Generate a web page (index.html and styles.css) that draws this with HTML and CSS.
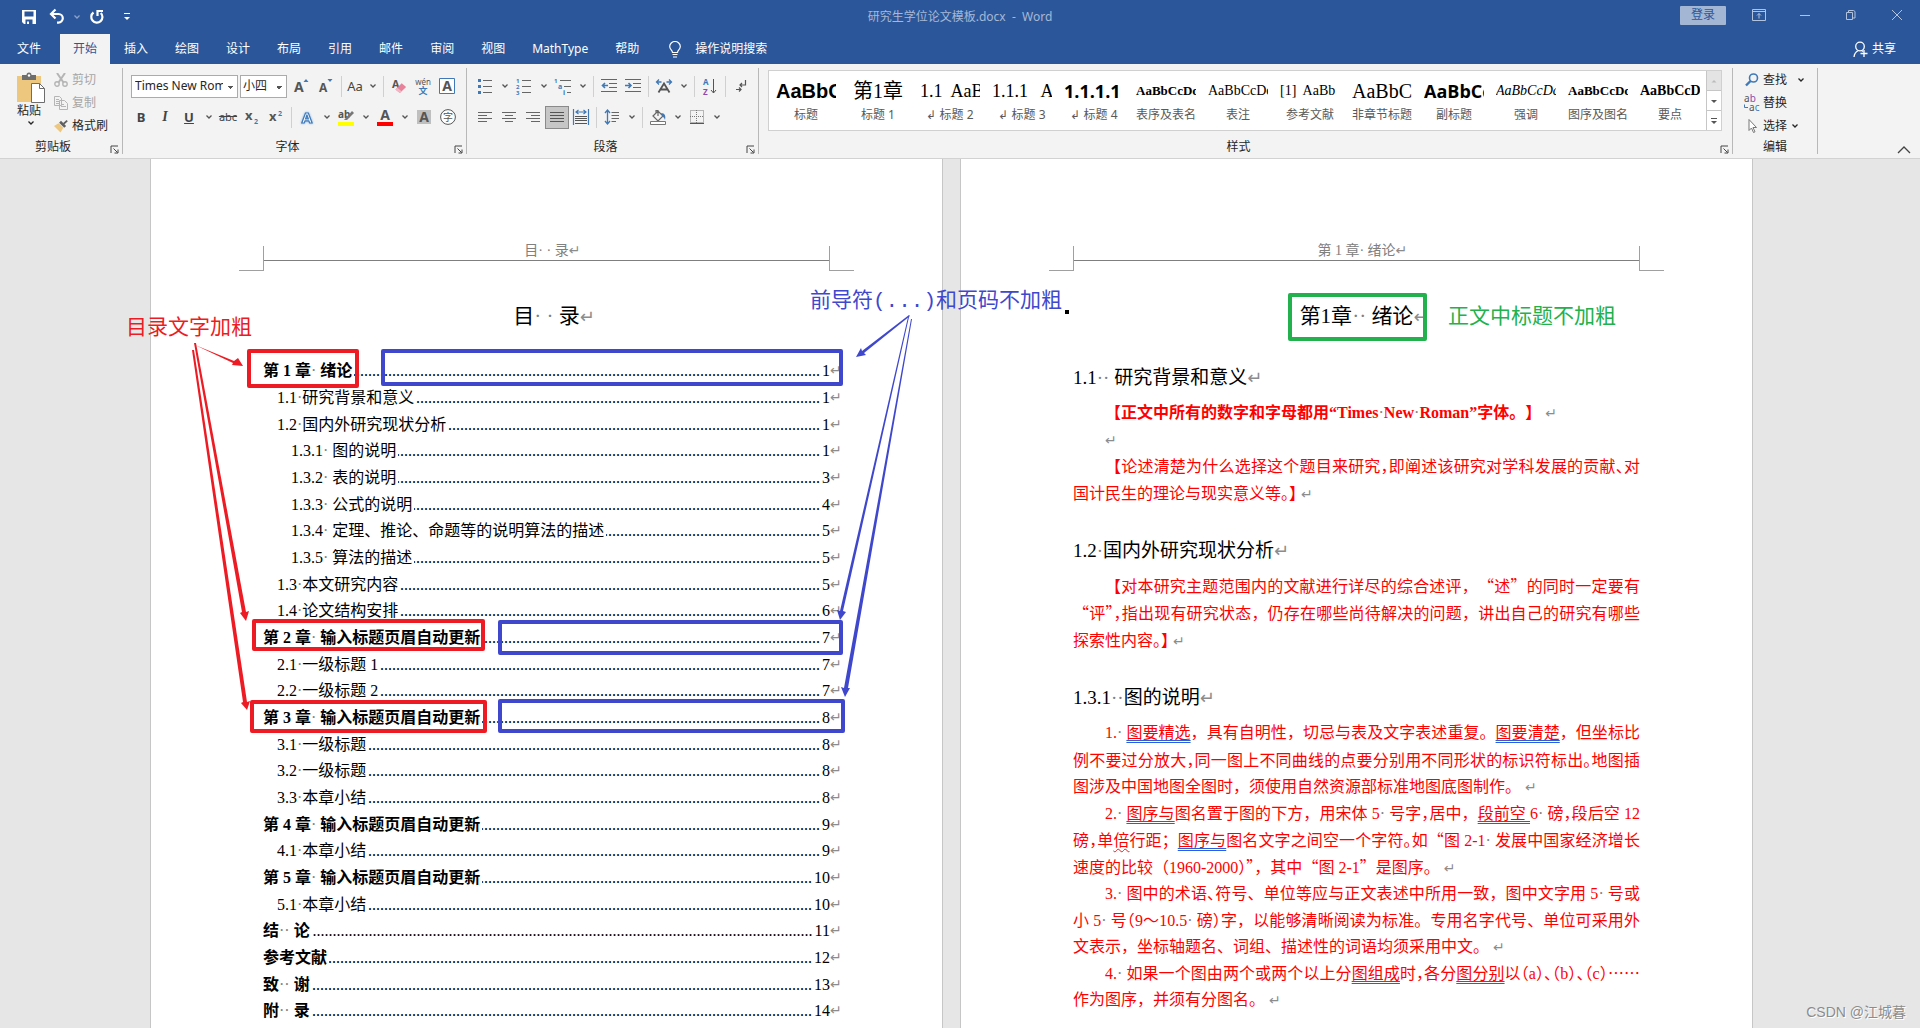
FILE: index.html
```html
<!DOCTYPE html>
<html lang="zh-CN">
<head>
<meta charset="utf-8">
<title>研究生学位论文模板.docx - Word</title>
<link rel="stylesheet" href="styles.css">
</head>
<body>
<svg class="defs" aria-hidden="true">
  <symbol id="chev" viewBox="0 0 8 8"><path d="M1.5 2.5 4 5l2.5-2.5" fill="none" stroke="currentColor" stroke-width="1.3"/></symbol>
  <symbol id="launch" viewBox="0 0 9 9"><path d="M1 8V1h7M3.5 3.5l4 4M8 4.5V8H4.500" fill="none" stroke="#444" stroke-width="1"/></symbol>
</svg>

<header class="titlebar">
  <div class="quick">
    <button class="tool" aria-label="保存"><svg width="16" height="16" viewBox="0 0 16 16"><path d="M1 1h14v14H3l-2-2z" fill="#fff"/><path d="M3.500 2.500h9v5h-9zM4.500 10.500h7V15H8v-2.500H6V15H4.500z" fill="#2b579a"/></svg></button>
    <button class="tool" aria-label="撤销"><svg width="16" height="16" viewBox="0 0 16 16"><path d="M2 5h7.500a4.300 4.300 0 0 1 0 8.600H8" fill="none" stroke="#fff" stroke-width="2.200"/><path d="M6.500.500 2 5l4.500 4.500" fill="none" stroke="#fff" stroke-width="2.200"/></svg></button>
    <button class="drop pale" aria-label="撤销列表"><svg width="8" height="8"><use href="#chev"/></svg></button>
    <button class="tool" aria-label="重复"><svg width="16" height="16" viewBox="0 0 16 16"><path d="M4.500 3.500A5.600 5.600 0 1 0 11.800 4" fill="none" stroke="#fff" stroke-width="2.200"/><path d="M8.500 7V2H14" fill="none" stroke="#fff" stroke-width="2.200"/></svg></button>
    <button class="drop custom" aria-label="自定义快速访问工具栏"><svg width="8" height="8" viewBox="0 0 8 8"><path d="M1 .500h6" stroke="#fff"/><path d="M1 4h6L4 7z" fill="#fff"/></svg></button>
  </div>
  <h1 class="doc-title">研究生学位论文模板.docx&nbsp; -&nbsp; Word</h1>
  <div class="window-tools">
    <button class="sign-in">登录</button>
    <button class="win" aria-label="功能区显示选项"><svg width="14" height="12" viewBox="0 0 14 12"><path d="M.500.500h13v11H.500zM.500 2.500h13M7 9.500v-5M5 6.500l2-2 2 2" fill="none" stroke="currentColor"/></svg></button>
    <button class="win" aria-label="最小化"><svg width="12" height="12"><path d="M1 6.500h10" stroke="currentColor"/></svg></button>
    <button class="win" aria-label="还原"><svg width="12" height="12" viewBox="0 0 12 12"><path d="M1.500 3.500h6v7h-6zM3.500 3V1.500h5l1.500 1V9H8" fill="none" stroke="currentColor"/></svg></button>
    <button class="win" aria-label="关闭"><svg width="12" height="12"><path d="m1 1 10 10M11 1 1 11" stroke="currentColor"/></svg></button>
  </div>
</header>

<nav class="tabs">
  <button class="tab file">文件</button>
  <button class="tab active">开始</button>
  <button class="tab">插入</button>
  <button class="tab">绘图</button>
  <button class="tab">设计</button>
  <button class="tab">布局</button>
  <button class="tab">引用</button>
  <button class="tab">邮件</button>
  <button class="tab">审阅</button>
  <button class="tab">视图</button>
  <button class="tab">MathType</button>
  <button class="tab">帮助</button>
  <button class="tell-me"><svg width="12" height="17" viewBox="0 0 12 17"><path d="M3.500 11.500C3.500 9 .700 8.500.700 5.500a5.300 5 0 0 1 10.600 0c0 3-2.800 3.500-2.800 6zM3.500 13.500h5M4 16h4" fill="none" stroke="#fff" stroke-width="1.200"/></svg>操作说明搜索</button>
  <button class="share"><svg width="15" height="17" viewBox="0 0 15 17"><circle cx="7" cy="5.500" r="4.300" fill="none" stroke="#fff" stroke-width="1.300"/><path d="M1 16c.300-3 2-5.500 4.500-6.500M8.500 9.500l1.500 1M11 9v7M7.500 12.500h7" fill="none" stroke="#fff" stroke-width="1.300"/></svg>共享</button>
</nav>

<div class="ribbon">
  <section class="group clipboard">
    <div class="tools">
      <button class="paste"><svg width="28" height="31" viewBox="0 0 28 31"><path d="M0 4h24v26H0z" fill="#edc77d"/><path d="M5 3h4.500a2.500 2.500 0 0 1 5 0H19v5H5z" fill="#6d6d6d"/><circle cx="12" cy="3.500" r="1.200" fill="#fff"/><path d="M14.500 11.500h8l5 5v14h-13z" fill="#fff" stroke="#6d6d6d"/><path d="M22.500 11.500v5h5" fill="none" stroke="#6d6d6d"/></svg>粘贴<svg class="chev" width="8" height="8"><use href="#chev"/></svg></button>
      <div class="stack">
        <button class="row" disabled><svg width="14" height="14" viewBox="0 0 14 14"><path d="m3 0 6.500 9.500M11 0 4.500 9.500" stroke="#b5b5b5" stroke-width="2"/><circle cx="3" cy="11" r="2.200" fill="none" stroke="#b5b5b5" stroke-width="1.400"/><circle cx="11" cy="11" r="2.200" fill="none" stroke="#b5b5b5" stroke-width="1.400"/></svg>剪切</button>
        <button class="row" disabled><svg width="14" height="14" viewBox="0 0 14 14"><path d="M.500.500h5l2 2v7h-7zM5.500 4.500h5l3 3v6h-8zM2 3.500h3M2 5.500h3M2 7.500h3M7 8.500h3M7 10.500h5" fill="none" stroke="#b5b5b5"/></svg>复制</button>
        <button class="row"><svg width="14" height="14" viewBox="0 0 15 14"><path d="m0 7 5-3 5 5-3 5z" fill="#edc77d"/><path d="m5.500 3.500 2-2 5.500 5.500-2 2z" fill="#5f5f5f"/><path d="m9.500 4 4-3.500 1.300 1.300L11 5.500z" fill="#5f5f5f"/></svg>格式刷</button>
      </div>
    </div>
    <footer><span>剪贴板</span><button class="launcher" aria-label="剪贴板选项"><svg width="9" height="9"><use href="#launch"/></svg></button></footer>
  </section>

  <section class="group font">
    <div class="tools lines">
      <div class="line-tools">
        <select class="combo face" aria-label="字体"><option>Times New Roman</option></select>
        <select class="combo size" aria-label="字号"><option>小四</option></select>
        <button class="tool" aria-label="增大字号"><svg width="16" height="16" viewBox="0 0 16 16"><text x="0" y="14" class="ic-b" font-size="14">A</text><path d="m9.500 4 2.500-3 2.500 3z" fill="#3f79b7"/></svg></button>
        <button class="tool" aria-label="减小字号"><svg width="16" height="16" viewBox="0 0 16 16"><text x="1" y="14" class="ic-b" font-size="12">A</text><path d="M9.500 1h5L12 4z" fill="#3f79b7"/></svg></button>
        <i class="sep"></i>
        <button class="tool aa" aria-label="更改大小写">Aa</button><button class="drop" aria-label="大小写选项"><svg width="8" height="8"><use href="#chev"/></svg></button>
        <i class="sep"></i>
        <button class="tool" aria-label="清除格式"><svg width="16" height="16" viewBox="0 0 18 16"><text x="1" y="10" class="ic-b" font-size="12">A</text><path d="m5 12 7-7 5 4-7 7z" fill="#e8829a"/><path d="m5 12 2-2 5 4-2 2z" fill="#f3b6c3"/></svg></button>
        <button class="tool" aria-label="拼音指南"><svg width="16" height="17" viewBox="0 0 16 17"><text x="8" y="7" text-anchor="middle" class="ic" font-size="8">wén</text><text x="8" y="16" text-anchor="middle" class="ic-blue" font-size="9">文</text></svg></button>
        <button class="tool" aria-label="字符边框"><svg width="16" height="16" viewBox="0 0 16 16"><path d="M.500.500h15v15H.500z" fill="#fff" stroke="#3f79b7"/><text x="8" y="13" text-anchor="middle" class="ic-b" font-size="14">A</text></svg></button>
      </div>
      <div class="line-tools">
        <button class="tool bold" aria-label="加粗">B</button>
        <button class="tool italic" aria-label="倾斜">I</button>
        <button class="tool under" aria-label="下划线">U</button><button class="drop" aria-label="下划线选项"><svg width="8" height="8"><use href="#chev"/></svg></button>
        <button class="tool strike" aria-label="删除线">abc</button>
        <button class="tool" aria-label="下标"><svg width="14" height="14" viewBox="0 0 14 14"><text x="0" y="10" class="ic-b" font-size="13">x</text><text x="9" y="14" class="ic-blue" font-size="7">2</text></svg></button>
        <button class="tool" aria-label="上标"><svg width="14" height="14" viewBox="0 0 14 14"><text x="0" y="11" class="ic-b" font-size="13">x</text><text x="9" y="6" class="ic-blue" font-size="7">2</text></svg></button>
        <i class="sep"></i>
        <button class="tool" aria-label="文本效果"><svg width="16" height="16" viewBox="0 0 16 16"><text x="8" y="13.500" text-anchor="middle" font-size="15" font-weight="700" fill="#fff" stroke="#3f79b7" stroke-width="1.200" class="glow">A</text></svg></button><button class="drop" aria-label="文本效果选项"><svg width="8" height="8"><use href="#chev"/></svg></button>
        <button class="tool" aria-label="突出显示"><svg width="16" height="17" viewBox="1 0 16 17"><text x="1" y="9" class="ic-b" font-size="10">ab</text><path d="m7 11 8-9 2 2-7 7z" fill="#777"/><path d="M1 13h16v4H1z" fill="#ff0"/></svg></button><button class="drop" aria-label="突出显示选项"><svg width="8" height="8"><use href="#chev"/></svg></button>
        <button class="tool" aria-label="字体颜色"><svg width="16" height="17" viewBox="0 0 16 17"><text x="8" y="11" text-anchor="middle" class="ic-b" font-size="14">A</text><path d="M0 13h16v4H0z" fill="red"/></svg></button><button class="drop" aria-label="字体颜色选项"><svg width="8" height="8"><use href="#chev"/></svg></button>
        <button class="tool" aria-label="字符底纹"><svg width="14" height="14" viewBox="0 0 14 14"><path d="M0 0h14v14H0z" fill="#bfbfbf"/><text x="7" y="12" text-anchor="middle" class="ic-b" font-size="14">A</text></svg></button>
        <button class="tool" aria-label="带圈字符"><svg width="16" height="16" viewBox="0 0 16 16"><circle cx="8" cy="8" r="7.400" fill="#fff" stroke="#555"/><text x="8" y="12" text-anchor="middle" class="ic" font-size="10">字</text></svg></button>
      </div>
    </div>
    <footer><span>字体</span><button class="launcher" aria-label="字体选项"><svg width="9" height="9"><use href="#launch"/></svg></button></footer>
  </section>

  <section class="group para">
    <div class="tools lines">
      <div class="line-tools">
        <button class="tool" aria-label="项目符号"><svg width="14" height="16" viewBox="0 0 14 16"><path d="M0 1h3v3H0zM0 7h3v3H0zM0 13h3v3H0z" fill="#3f79b7"/><path d="M5 2.500h9M5 8.500h9M5 14.500h9" stroke="#666"/></svg></button><button class="drop" aria-label="项目符号库"><svg width="8" height="8"><use href="#chev"/></svg></button>
        <button class="tool" aria-label="编号"><svg width="16" height="17" viewBox="0 0 16 17"><text x="0" y="5" class="ic-blue" font-size="6">1</text><text x="0" y="11" class="ic-blue" font-size="6">2</text><text x="0" y="17" class="ic-blue" font-size="6">3</text><path d="M6 2.500h9M6 8.500h9M6 14.500h9" stroke="#666"/></svg></button><button class="drop" aria-label="编号库"><svg width="8" height="8"><use href="#chev"/></svg></button>
        <button class="tool" aria-label="多级列表"><svg width="18" height="17" viewBox="0 0 18 17"><text x="0" y="5" class="ic-blue" font-size="6">1</text><text x="4" y="11" class="ic-blue" font-size="7">a</text><text x="9" y="17" class="ic-blue" font-size="7">i</text><path d="M6 2.500h11M10 8.500h7M13 14.500h4" stroke="#666"/></svg></button><button class="drop" aria-label="列表库"><svg width="8" height="8"><use href="#chev"/></svg></button>
        <i class="sep"></i>
        <button class="tool" aria-label="减少缩进量"><svg width="16" height="14" viewBox="0 0 16 14"><path d="M0 .500h16M8 4.500h8M8 8.500h8M0 12.500h16" stroke="#666"/><path d="M7 6.500H1.500M4 4 1.500 6.500 4 9" fill="none" stroke="#3f79b7" stroke-width="1.600"/></svg></button>
        <button class="tool" aria-label="增加缩进量"><svg width="16" height="14" viewBox="0 0 16 14"><path d="M0 .500h16M8 4.500h8M8 8.500h8M0 12.500h16" stroke="#666"/><path d="M0 6.500h6M3.500 4 6 6.500 3.500 9" fill="none" stroke="#3f79b7" stroke-width="1.600"/></svg></button>
        <i class="sep"></i>
        <button class="tool" aria-label="中文版式"><svg width="16" height="14" viewBox="0 0 16 14"><path d="m2.500 13.500 5.500-9 5.500 9M4.500 10.500h7" fill="none" stroke="#555" stroke-width="1.800"/><path d="M1 3h4.500M3 .500.500 3 3 5.500M15 3h-4.500M13 .500 15.500 3 13 5.500" fill="none" stroke="#3f79b7" stroke-width="1.300"/></svg></button><button class="drop" aria-label="版式选项"><svg width="8" height="8"><use href="#chev"/></svg></button>
        <i class="sep"></i>
        <button class="tool" aria-label="排序"><svg width="14" height="17" viewBox="0 0 14 17"><text x="0" y="7" class="ic-blue" font-size="8">A</text><text x="0" y="17" fill="#8a4bb0" font-weight="700" font-size="8">Z</text><path d="M10.500 1v14M8 12l2.500 3 2.500-3" fill="none" stroke="#555"/></svg></button>
        <i class="sep"></i>
        <button class="tool" aria-label="显示编辑标记"><svg width="12" height="14" viewBox="0 0 12 14"><path d="M10.500 1v5H5M7 4 5 6l2 2M1 10.500h5M4 8.500l2 2-2 2" fill="none" stroke="#555" stroke-width="1.200"/></svg></button>
      </div>
      <div class="line-tools">
        <button class="tool" aria-label="左对齐"><svg width="14" height="12" viewBox="0 0 14 12"><path d="M0 1.500h14M0 4.500h9M0 7.500h14M0 10.500h9" stroke="#666"/></svg></button>
        <button class="tool" aria-label="居中"><svg width="14" height="12" viewBox="0 0 14 12"><path d="M0 1.500h14M3 4.500h8M0 7.500h14M3 10.500h8" stroke="#666"/></svg></button>
        <button class="tool" aria-label="右对齐"><svg width="14" height="12" viewBox="0 0 14 12"><path d="M0 1.500h14M5 4.500h9M0 7.500h14M5 10.500h9" stroke="#666"/></svg></button>
        <button class="tool pressed" aria-label="两端对齐"><svg width="14" height="12" viewBox="0 0 14 12"><path d="M0 1.500h14M0 4.500h14M0 7.500h14M0 10.500h14" stroke="#555"/></svg></button>
        <button class="tool" aria-label="分散对齐"><svg width="16" height="16" viewBox="0 0 16 16"><path d="M.500 0v16M15.500 0v16M3 3h10M5.500 1 3 3l2.500 2M10.500 1 13 3l-2.500 2" fill="none" stroke="#3f79b7" stroke-width="1.200"/><path d="M2 7.500h12M2 9.500h12M2 11.500h12M2 14.500h12" stroke="#555"/></svg></button>
        <i class="sep"></i>
        <button class="tool" aria-label="行距"><svg width="16" height="16" viewBox="0 0 16 16"><path d="M3.500 1v14M1 4l2.500-3L6 4M1 12l2.500 3L6 12" fill="none" stroke="#3f79b7" stroke-width="1.300"/><path d="M7.500 3.500H15M7.500 6.500H15M7.500 9.500H15M7.500 12.500H12" stroke="#666"/></svg></button><button class="drop" aria-label="行距选项"><svg width="8" height="8"><use href="#chev"/></svg></button>
        <i class="sep"></i>
        <button class="tool" aria-label="底纹"><svg width="17" height="16" viewBox="0 0 17 16"><path d="m3 7 5-5 5 5-5 5zM6 5V1.500h2V7" fill="none" stroke="#666" stroke-width="1.200"/><path d="M11 4c4 0 5 3 4 7-1-3-2-3-2-3z" fill="#3f79b7"/><path d="M.500 12.500h15v3H.500z" fill="#fff" stroke="#777"/></svg></button><button class="drop" aria-label="底纹选项"><svg width="8" height="8"><use href="#chev"/></svg></button>
        <button class="tool" aria-label="边框"><svg width="14" height="14" viewBox="0 0 14 14"><path d="M.500.500h13v12H.500zM6.500 0v13M0 6.500h14" fill="none" stroke="#777" stroke-dasharray="1 1"/><path d="M0 13.500h14" stroke="#555"/></svg></button><button class="drop" aria-label="边框选项"><svg width="8" height="8"><use href="#chev"/></svg></button>
      </div>
    </div>
    <footer><span>段落</span><button class="launcher" aria-label="段落选项"><svg width="9" height="9"><use href="#launch"/></svg></button></footer>
  </section>

  <section class="group styles">
    <div class="gallery">
      <button class="style"><b class="pv sans">AaBbCc</b><span>标题</span></button>
      <button class="style"><b class="pv hei">第1章</b><span>标题 1</span></button>
      <button class="style"><b class="pv serif18">1.1&nbsp; AaB</b><span>↲ 标题 2</span></button>
      <button class="style"><b class="pv serif18">1.1.1&nbsp;&nbsp; A</b><span>↲ 标题 3</span></button>
      <button class="style"><b class="pv humanist">1.1.1.1</b><span>↲ 标题 4</span></button>
      <button class="style"><b class="pv small-bold">AaBbCcDd</b><span>表序及表名</span></button>
      <button class="style"><b class="pv small">AaBbCcDd</b><span>表注</span></button>
      <button class="style"><b class="pv small">[1]&nbsp; AaBb</b><span>参考文献</span></button>
      <button class="style"><b class="pv serif20">AaBbC</b><span>非章节标题</span></button>
      <button class="style"><b class="pv humanist">AaBbCc</b><span>副标题</span></button>
      <button class="style"><b class="pv small slant">AaBbCcDd</b><span>强调</span></button>
      <button class="style"><b class="pv small-bold">AaBbCcDd</b><span>图序及图名</span></button>
      <button class="style"><b class="pv strong">AaBbCcD</b><span>要点</span></button>
      <div class="scroller">
        <button disabled aria-label="上一行"><svg width="8" height="8"><path d="M1.500 5.500 4 3l2.500 2.500z" fill="#bbb"/></svg></button>
        <button aria-label="下一行"><svg width="8" height="8"><path d="M1 3h6L4 6z" fill="#555"/></svg></button>
        <button aria-label="更多样式"><svg width="8" height="8"><path d="M1 1.500h6" stroke="#555"/><path d="M1 4h6L4 7z" fill="#555"/></svg></button>
      </div>
    </div>
    <footer><span>样式</span><button class="launcher" aria-label="样式选项"><svg width="9" height="9"><use href="#launch"/></svg></button></footer>
  </section>

  <section class="group editing">
    <div class="stack">
      <button class="row"><svg width="14" height="14" viewBox="0 0 14 14"><circle cx="8.500" cy="5" r="4" fill="none" stroke="#3f79b7" stroke-width="1.600"/><path d="M5.500 8 1 12.500" stroke="#3f79b7" stroke-width="2.400"/></svg>查找<svg class="far" width="8" height="8"><use href="#chev"/></svg></button>
      <button class="row"><svg width="14" height="16" viewBox="1 0 14 16"><text x="0" y="7" class="ic" font-size="10">a<tspan fill="#8a4bb0">b</tspan></text><text x="5" y="16" class="ic" font-size="10">a<tspan fill="#3f79b7">c</tspan></text><path d="M.500 9.500v3H4" fill="none" stroke="#3f79b7"/></svg>替换</button>
      <button class="row"><svg width="14" height="14" viewBox="0 0 14 14"><path d="M4 .500v11l2.500-2.500 2 4.500 1.500-.700-2-4.300h3.500z" fill="#fff" stroke="#777"/></svg>选择<svg width="8" height="8"><use href="#chev"/></svg></button>
    </div>
    <footer><span>编辑</span></footer>
  </section>
  <button class="collapse" aria-label="折叠功能区"><svg width="14" height="9"><path d="m1 8 6-6 6 6" fill="none" stroke="#444" stroke-width="1.300"/></svg></button>
</div>

<main class="workspace">
  <div class="spread">
    <article class="page">
      <header class="running">目<i>·</i> <i>·</i> 录<span class="mark">↵</span></header>
      <h2 class="chapter">目<i>·</i> <i>·</i> 录<span class="mark">↵</span></h2>
      <ol class="toc">
        <li class="l1"><a href="#c1">第 1 章<i>·</i> 绪论</a><b>1</b><span class="mark">↵</span></li>
        <li class="l2"><a href="#s11">1.1<i>·</i>研究背景和意义</a><b>1</b><span class="mark">↵</span></li>
        <li class="l2"><a href="#s12">1.2<i>·</i>国内外研究现状分析</a><b>1</b><span class="mark">↵</span></li>
        <li class="l3"><a href="#s131">1.3.1<i>·</i> 图的说明</a><b>1</b><span class="mark">↵</span></li>
        <li class="l3"><a href="#s132">1.3.2<i>·</i> 表的说明</a><b>3</b><span class="mark">↵</span></li>
        <li class="l3"><a href="#s133">1.3.3<i>·</i> 公式的说明</a><b>4</b><span class="mark">↵</span></li>
        <li class="l3"><a href="#s134">1.3.4<i>·</i> 定理、推论、命题等的说明算法的描述</a><b>5</b><span class="mark">↵</span></li>
        <li class="l3"><a href="#s135">1.3.5<i>·</i> 算法的描述</a><b>5</b><span class="mark">↵</span></li>
        <li class="l2"><a href="#s13">1.3<i>·</i>本文研究内容</a><b>5</b><span class="mark">↵</span></li>
        <li class="l2"><a href="#s14">1.4<i>·</i>论文结构安排</a><b>6</b><span class="mark">↵</span></li>
        <li class="l1"><a href="#c2">第 2 章<i>·</i> 输入标题页眉自动更新</a><b>7</b><span class="mark">↵</span></li>
        <li class="l2"><a href="#s21">2.1<i>·</i>一级标题 1</a><b>7</b><span class="mark">↵</span></li>
        <li class="l2"><a href="#s22">2.2<i>·</i>一级标题 2</a><b>7</b><span class="mark">↵</span></li>
        <li class="l1"><a href="#c3">第 3 章<i>·</i> 输入标题页眉自动更新</a><b>8</b><span class="mark">↵</span></li>
        <li class="l2"><a href="#s31">3.1<i>·</i>一级标题</a><b>8</b><span class="mark">↵</span></li>
        <li class="l2"><a href="#s32">3.2<i>·</i>一级标题</a><b>8</b><span class="mark">↵</span></li>
        <li class="l2"><a href="#s33">3.3<i>·</i>本章小结</a><b>8</b><span class="mark">↵</span></li>
        <li class="l1"><a href="#c4">第 4 章<i>·</i> 输入标题页眉自动更新</a><b>9</b><span class="mark">↵</span></li>
        <li class="l2"><a href="#s41">4.1<i>·</i>本章小结</a><b>9</b><span class="mark">↵</span></li>
        <li class="l1"><a href="#c5">第 5 章<i>·</i> 输入标题页眉自动更新</a><b>10</b><span class="mark">↵</span></li>
        <li class="l2"><a href="#s51">5.1<i>·</i>本章小结</a><b>10</b><span class="mark">↵</span></li>
        <li class="l1"><a href="#end">结<i>·</i> <i>·</i> 论</a><b>11</b><span class="mark">↵</span></li>
        <li class="l1"><a href="#ref">参考文献</a><b>12</b><span class="mark">↵</span></li>
        <li class="l1"><a href="#thx">致<i>·</i> <i>·</i> 谢</a><b>13</b><span class="mark">↵</span></li>
        <li class="l1"><a href="#app">附<i>·</i> <i>·</i> 录</a><b>14</b><span class="mark">↵</span></li>
      </ol>
    </article>

    <article class="page">
      <header class="running">第 1 章<i>·</i> 绪论<span class="mark">↵</span></header>
      <h2 class="chapter" id="c1">第1章<i>·</i><i>·</i> 绪论<span class="mark">↵</span></h2>

      <h3 id="s11">1.1<i>·</i><i>·</i> 研究背景和意义<span class="mark">↵</span></h3>
      <p class="strong-note"><span class="ln first">【正文中所有的数字和字母都用“Times<i>·</i>New<i>·</i>Roman”字体。】<span class="mark">↵</span></span><span class="ln first"><span class="mark">↵</span></span></p>
      <p><span class="ln first full">【论述清楚为什么选择这个题目来研究<s>，</s>即阐述该研究对学科发展的贡献<s>、</s>对</span><span class="ln">国计民生的理论与现实意义等<s>。】</s><span class="mark">↵</span></span></p>

      <h3 id="s12">1.2<i>·</i>国内外研究现状分析<span class="mark">↵</span></h3>
      <p><span class="ln first full">【对本研究主题范围内的文献进行详尽的综合述评，<q>“述”</q>的同时一定要有</span><span class="ln full"><q>“评</q><s>”，</s>指出现有研究状态，仍存在哪些尚待解决的问题，讲出自己的研究有哪些</span><span class="ln">探索性内容<s>。】</s><span class="mark">↵</span></span></p>

      <h3 id="s131">1.3.1<i>·</i><i>·</i>图的说明<span class="mark">↵</span></h3>
      <p><span class="ln first full">1.<i>·</i> <u>图要精选</u>，具有自明性，切忌与表及文字表述重复。<u>图要清楚</u>，但坐标比</span><span class="ln full">例不要过分放大<s>，</s>同一图上不同曲线的点要分别用不同形状的标识符标出<s>。</s>地图插</span><span class="ln">图涉及中国地图全图时，须使用自然资源部标准地图底图制作。<span class="mark">↵</span></span></p>
      <p><span class="ln first full">2.<i>·</i> <u>图序与</u>图名置于图的下方，用宋体 5<i>·</i> 号字<s>，</s>居中，<u>段前空 </u>6<i>·</i> 磅<s>，</s>段后空 12</span><span class="ln full">磅<s>，</s>单<u class="typo">倍</u>行距；<u>图序与</u>图名文字之间空一个字符<s>。</s>如<q>“</q>图 2-1<i>·</i> 发展中国家经济增长</span><span class="ln">速度的比较（1960-2000<s>）”</s>，其中<q>“</q>图 2-1<q>”</q>是图序。<span class="mark">↵</span></span></p>
      <p><span class="ln first full">3.<i>·</i> 图中的术语<s>、</s>符号、单位等应与正文表述中所用一致，图中文字用 5<i>·</i> 号或</span><span class="ln full">小 5<i>·</i> 号<s>（</s>9～10.5<i>·</i> 磅<s>）</s>字，以能够清晰阅读为标准。专用名字代号、单位可采用外</span><span class="ln">文表示，坐标轴题名、词组、描述性的词语均须采用中文。<span class="mark">↵</span></span></p>
      <p><span class="ln first full">4.<i>·</i> 如果一个图由两个或两个以上分<u>图组成</u>时<s>，</s>各分<u>图分别</u>以<s>（</s>a<s>）、（</s>b<s>）、（</s>c<s>）</s><q>……</q></span><span class="ln">作为图序，并须有分图名。<span class="mark">↵</span></span></p>
    </article>

    <svg class="marks" width="1603" height="869" viewBox="150 159 1603 869" aria-hidden="true">
      <g fill="none" stroke="#ed1c24" stroke-width="4" stroke-linejoin="round">
        <path d="M249 351h108v35H249zM254 621h229v28H254zM252 702h233v29H252z"/>
      </g>
      <g fill="none" stroke="#3f48cc" stroke-width="4" stroke-linejoin="round">
        <path d="M383 351h458v33H383zM500 622h341v31H500zM500 701h343v30H500z"/>
      </g>
      <path d="M1290 295h135v44h-135z" fill="none" stroke="#22b14c" stroke-width="4" stroke-linejoin="round"/>
      <g fill="#ed1c24">
        <path d="m195 345 39 16 4-3 5 8-11-1 1-2z"/>
        <path d="m194 343 2 0 50 269 3-1-3 10-6-8 2-1z"/>
        <path d="m192 350 2 0 53 352 3-1-3 9-6-7 2-1z"/>
      </g>
      <g fill="#3f48cc">
        <path d="m910 316-46 37 2 2-10 2 5-9 1 3 47-36z"/>
        <path d="m909 317-66 294 3 1-6 8-3-10 3 1 68-294z"/>
        <path d="m912 319-64 369 2 0-5 9-4-10 3 1 67-369z"/>
      </g>
      <path d="M1065 310h4v4h-4z" fill="#000"/>
    </svg>
    <p class="callout red">目录文字加粗</p>
    <p class="callout blue">前导符(...)和页码不加粗</p>
    <p class="callout green">正文中标题不加粗</p>
  </div>
  <p class="watermark">CSDN @江城暮</p>
</main>
</body>
</html>
```
FILE: styles.css
```css
* { box-sizing: border-box; }

body {
  margin: 0;
  height: 100vh;
  display: flex;
  flex-direction: column;
  overflow: hidden;
  background: #e6e6e6;
  color: #262626;
  font: 12px/18px "Noto Sans", "Noto Sans CJK SC", sans-serif;
}

button {
  margin: 0;
  padding: 0;
  border: 0;
  background: none;
  color: inherit;
  font: inherit;
  white-space: nowrap;
}

.defs { position: absolute; width: 0; height: 0; }

/* Title bar */
.titlebar {
  display: grid;
  grid-template-columns: 1fr auto 1fr;
  align-items: center;
  height: 34px;
  background: #2b579a;
  color: #b3c3dc;
}
.quick { display: flex; align-items: center; padding-left: 17px; }
.quick .tool + .tool { margin-left: 4px; }
.quick .drop + .tool { margin-left: 1px; }
.quick .custom { margin-left: 10px; }
.pale { color: #8aa3ca; }
.doc-title { margin: 0; font-size: 12px; font-weight: 400; line-height: 18px; color: #a6b8d6; }
.window-tools { display: flex; justify-content: flex-end; align-items: center; padding-bottom: 4px; }
.sign-in { width: 46px; height: 19px; margin-right: 10px; border-radius: 1px; background: #a3b6d4; color: #2b579a; }
.win { width: 46px; height: 30px; color: #b3c3dc; }
.win svg { display: block; margin: auto; }

/* Tabs */
.tabs { display: flex; align-items: stretch; gap: 1px; height: 30px; padding-left: 4px; background: #2b579a; color: #fff; }
.tab { padding: 0 13px; }
.file { margin-right: 5px; }
.active { background: #f3f3f3; color: #2b579a; }
.tell-me { display: flex; align-items: center; gap: 14px; margin-left: 16px; }
.share { display: flex; align-items: center; gap: 4px; margin-left: auto; padding-right: 24px; }

/* Ribbon */
.ribbon { display: flex; height: 95px; padding: 4px 0; border-bottom: 1px solid #d2d2d2; background: #f3f3f3; }
.group { display: flex; flex-direction: column; justify-content: space-between; border-right: 1px solid #b8b8b8; }
.group footer { display: flex; align-items: flex-end; justify-content: center; position: relative; height: 14px; padding-right: 14px; }
.launcher { position: absolute; right: 3px; bottom: 0; width: 9px; height: 9px; }
.launcher svg { display: block; }
.group footer span { line-height: 14px; }
.tools { display: flex; }
.clipboard { width: 123px; }
.clipboard footer { padding-right: 16px; }
.font { width: 344px; }
.para { width: 292px; }
.styles { flex: 1; min-width: 0; }
.editing { width: 85px; }

.paste { display: flex; flex-direction: column; align-items: flex-start; width: 28px; margin: 4px 9px 0 17px; line-height: 16px; }
.paste .chev { margin-left: 10px; }
.stack { display: flex; flex-direction: column; }
.row { display: flex; align-items: center; gap: 4px; height: 23px; }
.row:disabled { color: #a6a6a6; }

.lines { flex-direction: column; padding-top: 6px; }
.line-tools { display: flex; align-items: center; height: 24px; padding-left: 6px; color: #555; }
.line-tools + .line-tools { margin-top: 7px; }
.font .line-tools:first-child { padding-left: 8px; }
.tool { width: 24px; height: 23px; flex: none; color: #444; }
.tool svg, .drop svg { display: block; margin: auto; overflow: visible; }
.titlebar .tool { color: #fff; }
.aa { width: 20px; font-size: 13px; }
.drop { width: 15px; height: 23px; flex: none; }
.sep { width: 1px; height: 21px; margin: 0 3px; flex: none; background: #d0d0d0; }
.bold { font-weight: 700; font-size: 13px; }
.italic { font: italic 700 14px/18px "Liberation Serif", serif; }
.under { font-weight: 700; font-size: 13px; text-decoration: underline; }
.strike { font-size: 11px; text-decoration: line-through; }
.pressed { border: 1px solid #8a8a8a; background: #c6c6c6; }
.ic { fill: #555; }
.ic-b { fill: #555; font-weight: 700; }
.ic-blue { fill: #3f79b7; font-weight: 700; }
.glow { filter: drop-shadow(0 0 1px #7fb0e6); }

.combo {
  appearance: none;
  height: 23px;
  padding: 0 14px 0 3px;
  border: 1px solid #ababab;
  border-radius: 0;
  background: #fff conic-gradient(from -45deg at 50% 100%, #555 90deg, #fff 0) no-repeat right 4px top 10px / 6px 3px;
  color: #262626;
  font: 12px/18px "Noto Sans", "Noto Sans CJK SC", sans-serif;
}
.face { width: 107px; margin-right: 2px; text-overflow: clip; }
.size { width: 47px; margin-right: 3px; padding-left: 2px; }

/* Style gallery */
.gallery { display: flex; height: 61px; margin: 2px 10px 0 9px; padding-left: 1px; border: 1px solid #d0d0d0; background: #fff; }
.style { display: flex; flex-direction: column; flex: 1; min-width: 0; padding: 6px 6px 0; color: #595959; }
.style span { align-self: stretch; line-height: 20px; margin: 0 -6px; }
.pv { align-self: stretch; height: 28px; overflow: hidden; color: #000; font-weight: 400; line-height: 28px; text-align: left; }
.sans { font-family: "Liberation Sans", sans-serif; font-weight: 700; font-size: 20px; }
.hei { font-family: "Liberation Serif", "Noto Sans CJK SC", serif; font-size: 20px; text-align: center; }
.serif18 { font-family: "Liberation Serif", serif; font-size: 18px; }
.serif20 { font-family: "Liberation Serif", serif; font-size: 20px; }
.humanist { font-family: "Open Sans", sans-serif; font-weight: 700; font-size: 18px; }
.small { font-family: "Liberation Serif", serif; font-size: 14px; }
.small-bold { font-family: "Liberation Serif", serif; font-weight: 700; font-size: 13px; }
.strong { font-family: "Liberation Serif", serif; font-weight: 700; font-size: 14px; }
.slant { font-style: italic; }
.scroller { display: flex; flex-direction: column; width: 15px; flex: none; border-left: 1px solid #c6c6c6; }
.scroller button { flex: 1; border-bottom: 1px solid #c6c6c6; }
.scroller button:last-child { border-bottom: 0; }
.scroller button:disabled { background: #e4e4e4; }
.scroller svg { display: block; margin: auto; }

.editing .stack { padding-left: 12px; }
.editing .row svg:first-child { overflow: visible; }
.editing .row .far { margin-left: 6px; }
.editing footer { padding-right: 0; }
.collapse { align-self: flex-end; width: 14px; margin: 0 9px 0 79px; flex: none; }
.collapse svg { display: block; }

/* Document */
.workspace { flex: 1; min-height: 0; position: relative; overflow: hidden; padding-right: 17px; }
.spread { position: relative; display: flex; gap: 17px; width: fit-content; margin: 0 auto; }
.page {
  width: 793px;
  min-height: 1010px;
  padding: 82px 112px 0;
  border: solid #c6c6c6;
  border-width: 0 1px 1px;
  background: #fff;
  color: #000;
  font: 16px/27px "Liberation Serif", "Noto Sans CJK SC", serif;
  text-spacing-trim: space-all;
}
.page i { font-style: normal; font-weight: 400; color: #808080; }
.mark { display: inline-block; width: 0; color: #8c8c8c; font: 400 14px/12px "DejaVu Sans", sans-serif; white-space: nowrap; }
.running { position: relative; border-bottom: 1px solid #7f7f7f; color: #808080; font-size: 14px; line-height: 19px; text-align: center; white-space: pre; }
.running::before, .running::after { content: ""; position: absolute; top: 5px; width: 24px; height: 24px; border-bottom: 1px solid #a0a0a0; }
.running::before { left: -24px; border-right: 1px solid #a0a0a0; }
.running::after { right: -24px; border-left: 1px solid #a0a0a0; }
.chapter { margin: 42px 0 27px; font-size: 21px; font-weight: 400; line-height: 27px; text-align: center; }
.chapter .mark, h3 .mark { font-size: 18px; }

.toc { margin: 0; padding: 0; list-style: none; }
.toc li { display: flex; height: 27px; line-height: 27px; white-space: nowrap; }
.toc li:nth-child(3n) { height: 26px; }
.toc a { display: flex; flex: 1; min-width: 0; color: inherit; text-decoration: none; white-space: pre; }
.toc a::after {
  content: "........................................................................................................................................................";
  flex: 1;
  width: 0;
  margin-left: 2px;
  overflow: hidden;
  direction: rtl;
  font-weight: 400;
}
.toc b { padding-left: 2px; font-weight: 400; }
.toc .mark { line-height: 27px; }
.l1 a { font-weight: 700; }
.l2 { padding-left: 14px; }
.l3 { padding-left: 28px; }

h3 { margin: 32px 0 8px; font-size: 19px; font-weight: 400; line-height: 27px; }
.chapter + h3 { margin-top: 34px; }
.page p { margin: 0 0 -1px; color: #f00; }
.ln { display: block; height: 27px; white-space: pre-wrap; }
.first { padding-left: 32px; }
.full { text-align: justify; text-align-last: justify; }
.strong-note { font-weight: 700; }
.ln s { text-decoration: none; font-family: "Noto Sans CJK SC", sans-serif; font-feature-settings: "halt"; }
.ln q { font-family: "Noto Sans CJK SC", sans-serif; }
.ln q::before, .ln q::after { content: none; }
.ln u { text-decoration: underline double 1px #2b5fd9; text-underline-offset: 2px; }
.ln .typo { text-decoration: underline wavy 1px #e02020; }
.ln .mark { margin-left: 4px; }
.first > .mark:first-child { margin-left: 0; }

/* Annotations drawn over the two pages */
.marks { position: absolute; left: 0; top: 0; overflow: visible; }
.callout { position: absolute; margin: 0; font: 21px/28px "Liberation Mono", "Noto Sans CJK SC", monospace; white-space: nowrap; }
.red { left: -24px; top: 156px; color: #ed1c24; }
.blue { left: 660px; top: 129px; color: #3f48cc; }
.green { left: 1298px; top: 145px; color: #22b14c; }
.watermark { position: absolute; right: 14px; bottom: 6px; margin: 0; color: #8c8c8c; font: 14px/20px "Liberation Sans", "Noto Sans CJK SC", sans-serif; text-shadow: 1px 1px 0 #fff; }
```
